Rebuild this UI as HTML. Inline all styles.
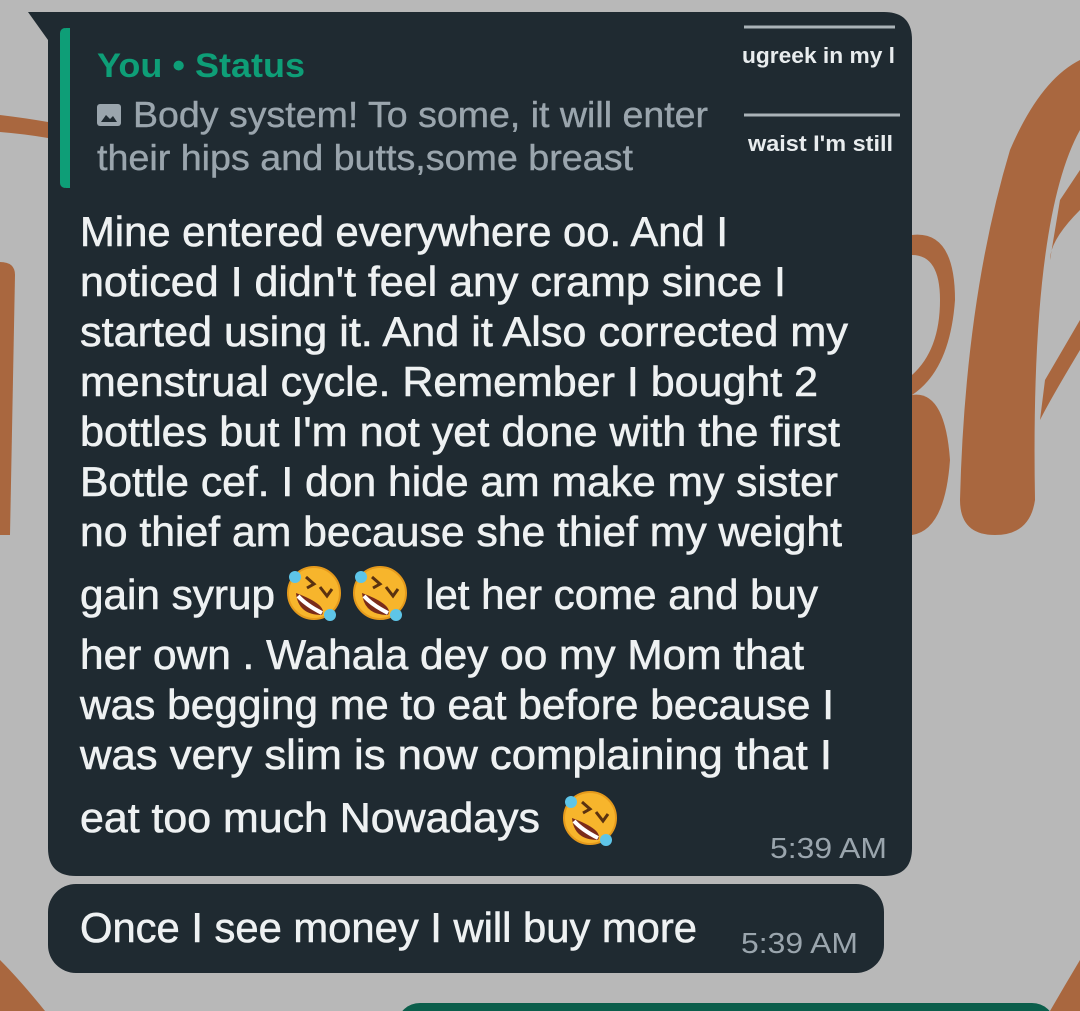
<!DOCTYPE html>
<html><head><meta charset="utf-8"><style>
html,body{margin:0;padding:0;background:#b8b8b8;}
svg{display:block}
text{font-family:"Liberation Sans",Arial,sans-serif}
</style></head><body>
<svg width="1080" height="1011" viewBox="0 0 1080 1011" xmlns="http://www.w3.org/2000/svg">
<defs>
<g id="emo">
<circle cx="28" cy="28" r="26" fill="#f7b52c"/>
<circle cx="28" cy="28" r="26" fill="none" stroke="#e59a1c" stroke-width="2"/>
<path d="M10 28 Q12 50 36 50 Q42 40 10 28Z" fill="#7a2b1a"/>
<path d="M12 31 Q20 40 36 48" stroke="#fff" stroke-width="4" fill="none"/>
<path d="M20 12 L28 19 L21 23" stroke="#5a3210" stroke-width="3" fill="none"/>
<path d="M34 22 L41 31 L46 24" stroke="#5a3210" stroke-width="3" fill="none"/>
<circle cx="9" cy="12" r="6" fill="#5ec5e8"/>
<circle cx="44" cy="50" r="6" fill="#5ec5e8"/>
</g>
</defs>
<rect width="1080" height="1011" fill="#b8b8b8"/>
<g fill="#a9673f">
<path d="M0 115 Q25 118 48 122 L48 138 Q25 134 0 132Z"/>
<path d="M0 262 Q15 262 15 275 L10 535 L0 535Z"/>
<path d="M1080 60 L1080 130 Q1030 220 1035 500 Q1030 535 995 535 Q960 535 960 500 Q965 300 1010 150 Q1040 80 1080 60Z"/>
<path d="M1080 170 L1080 210 Q1050 240 1050 260 L1060 200Z"/>
<path d="M912 235 Q955 230 955 300 Q950 370 912 395 L912 375 Q940 350 940 300 Q940 255 912 255Z"/>
<path d="M912 395 Q945 390 950 460 Q945 530 912 535Z"/>
<path d="M1080 320 L1080 350 Q1050 400 1040 420 L1045 380Z"/>
<path d="M1080 960 L1080 1011 L1050 1011 Q1065 985 1080 960Z"/>
<path d="M0 960 Q20 980 45 1011 L0 1011Z"/>
</g>
<path d="M28 12 L884 12 Q912 12 912 40 L912 848 Q912 876 884 876 L76 876 Q48 876 48 848 L48 40 Z" fill="#1f2a31"/>
<rect x="60" y="28" width="10" height="160" rx="5" fill="#0e9e77"/>
<rect x="66" y="28" width="4" height="160" fill="#0e9e77"/>
<line x1="744" y1="27" x2="895" y2="27" stroke="#aab3b8" stroke-width="3"/>
<line x1="744" y1="115" x2="900" y2="115" stroke="#aab3b8" stroke-width="3"/>
<text x="742" y="63" font-size="22" font-weight="bold" fill="#e8ecee" textLength="153" lengthAdjust="spacingAndGlyphs">ugreek in my l</text>
<text x="748" y="151" font-size="22" font-weight="bold" fill="#e8ecee" textLength="145" lengthAdjust="spacingAndGlyphs">waist I'm still</text>
<text x="97" y="77" font-size="34" font-weight="bold" fill="#0e9e77" textLength="208" lengthAdjust="spacingAndGlyphs">You • Status</text>
<rect x="97" y="104" width="24" height="22" rx="3" fill="#9aa5ad"/>
<path d="M101 122 L106 115 L110 119 L113 116 L117 122Z" fill="#1f2a31"/>
<g font-size="36" fill="#9aa5ad" stroke="#9aa5ad" stroke-width="0.4">
<text x="133" y="127" textLength="575" lengthAdjust="spacingAndGlyphs">Body system! To some, it will enter</text>
<text x="97" y="170" textLength="536" lengthAdjust="spacingAndGlyphs">their hips and butts,some breast</text>
</g>
<g font-size="42" fill="#eef1f2" stroke="#eef1f2" stroke-width="0.6">
<text x="80" y="246" textLength="648" lengthAdjust="spacingAndGlyphs">Mine entered everywhere oo. And I</text>
<text x="80" y="296" textLength="706" lengthAdjust="spacingAndGlyphs">noticed I didn't feel any  cramp since I</text>
<text x="80" y="346" textLength="768" lengthAdjust="spacingAndGlyphs">started using it. And it Also corrected my</text>
<text x="80" y="396" textLength="738" lengthAdjust="spacingAndGlyphs">menstrual cycle. Remember I bought 2</text>
<text x="80" y="446" textLength="760" lengthAdjust="spacingAndGlyphs">bottles but I'm not yet done with the first</text>
<text x="80" y="496" textLength="758" lengthAdjust="spacingAndGlyphs">Bottle cef. I don hide am make my sister</text>
<text x="80" y="546" textLength="762" lengthAdjust="spacingAndGlyphs">no thief am because she thief my weight</text>
<text x="80" y="609" textLength="195" lengthAdjust="spacingAndGlyphs">gain syrup</text>
<text x="425" y="609" textLength="393" lengthAdjust="spacingAndGlyphs">let her come and buy</text>
<text x="80" y="669" textLength="724" lengthAdjust="spacingAndGlyphs">her own . Wahala dey oo my Mom that</text>
<text x="80" y="719" textLength="754" lengthAdjust="spacingAndGlyphs">was begging me to eat before because I</text>
<text x="80" y="769" textLength="752" lengthAdjust="spacingAndGlyphs">was very slim  is now complaining that I</text>
<text x="80" y="832" textLength="460" lengthAdjust="spacingAndGlyphs">eat too much Nowadays</text>
</g>
<use href="#emo" x="286" y="565"/>
<use href="#emo" x="352" y="565"/>
<use href="#emo" x="562" y="790"/>
<text x="770" y="858" font-size="29" fill="#9aa5ad" textLength="117" lengthAdjust="spacingAndGlyphs">5:39 AM</text>
<rect x="48" y="884" width="836" height="89" rx="28" fill="#1f2a31"/>
<text x="80" y="942" font-size="42" fill="#eef1f2" stroke="#eef1f2" stroke-width="0.6" textLength="617" lengthAdjust="spacingAndGlyphs">Once I see money I will buy more</text>
<text x="741" y="953" font-size="29" fill="#9aa5ad" textLength="117" lengthAdjust="spacingAndGlyphs">5:39 AM</text>
<rect x="398" y="1003" width="656" height="40" rx="22" fill="#0b5e4b"/>
</svg>
</body></html>
